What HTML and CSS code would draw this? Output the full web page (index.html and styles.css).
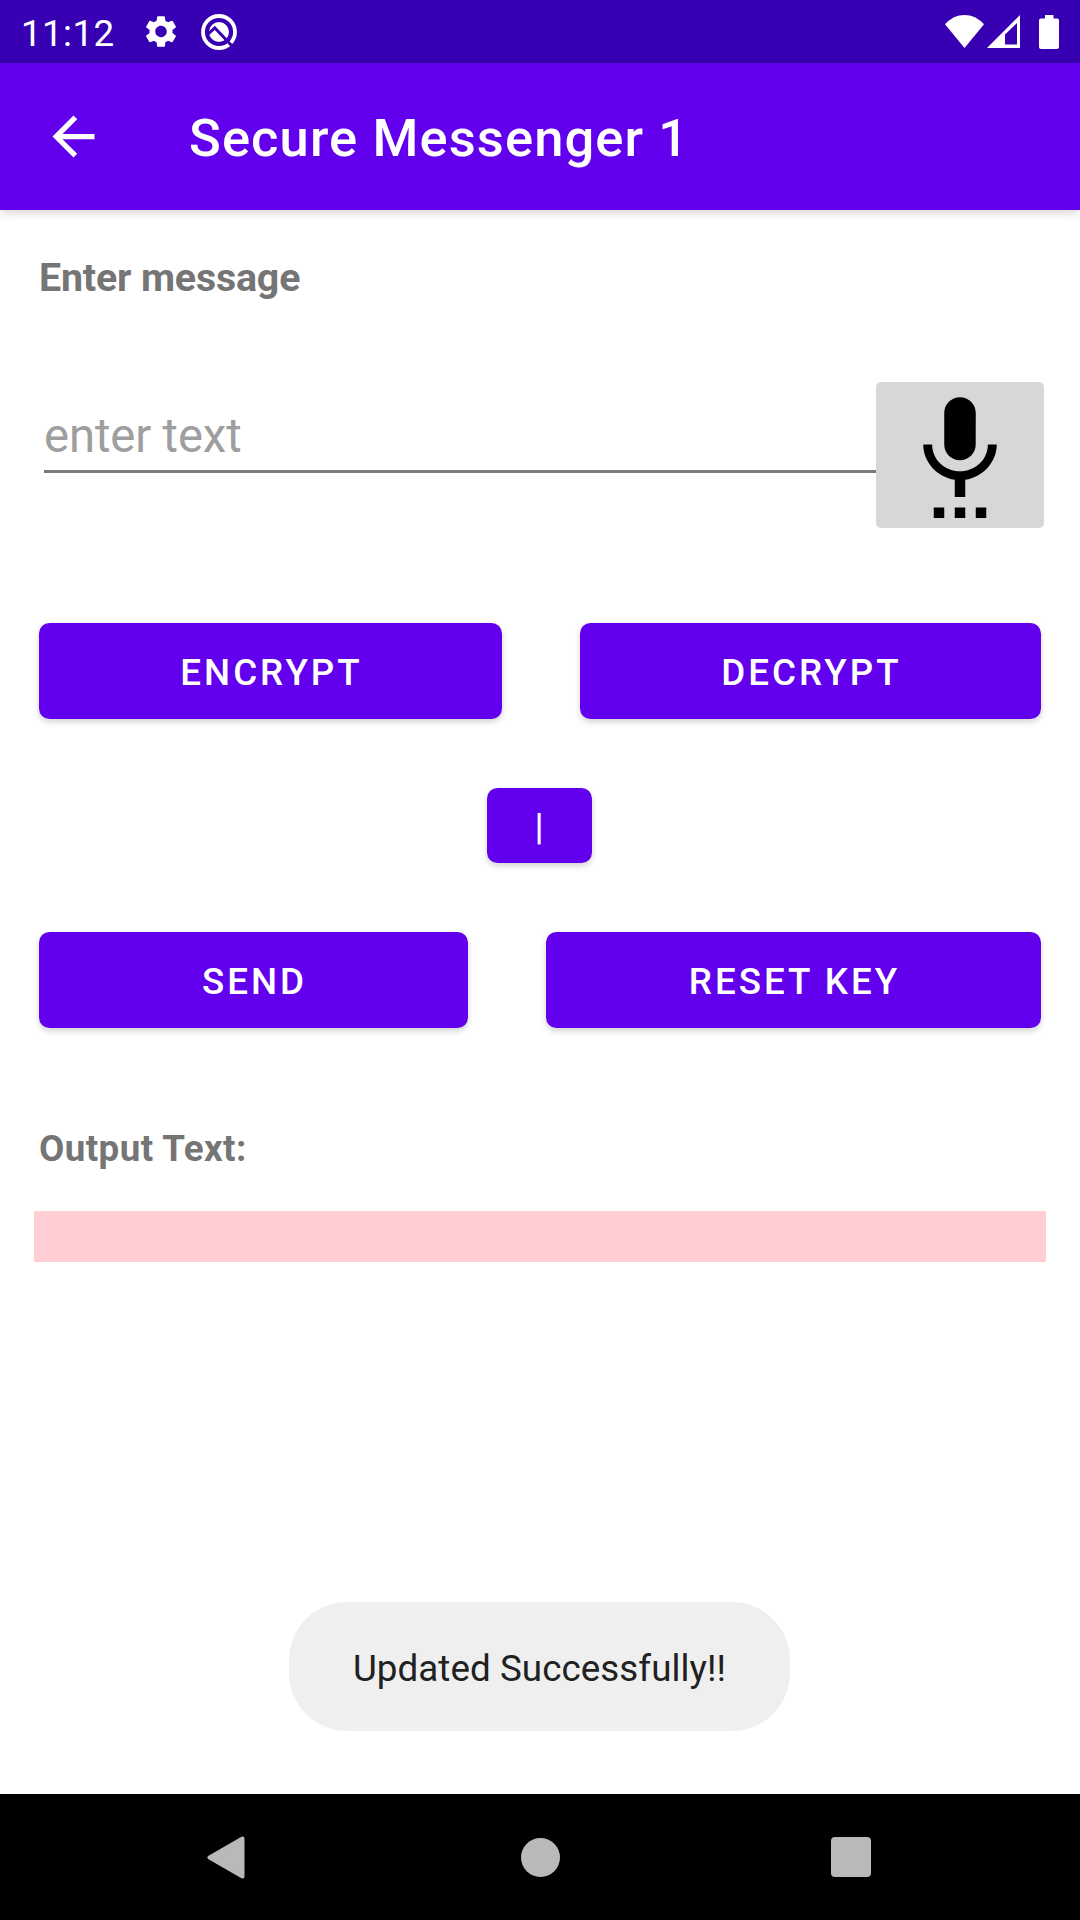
FILE: index.html
```html
<!DOCTYPE html>
<html lang="en">
<head>
<meta charset="utf-8">
<title>Secure Messenger 1</title>
<link rel="stylesheet" href="styles.css">
</head>
<body>
<div class="screen">
  <div class="status-bar">
    <span class="clock">11:12</span>
    <svg class="gear" viewBox="2 2 20 20"><path fill="#fff" d="M19.14 12.94c.04-.3.06-.61.06-.94 0-.32-.02-.64-.07-.94l2.03-1.58a.49.49 0 0 0 .12-.61l-1.92-3.32a.488.488 0 0 0-.59-.22l-2.39.96c-.5-.38-1.03-.7-1.62-.94l-.36-2.54a.484.484 0 0 0-.48-.41h-3.84c-.24 0-.43.17-.47.41l-.36 2.54c-.59.24-1.13.57-1.62.94l-2.39-.96c-.22-.08-.47 0-.59.22L2.74 8.87c-.12.21-.08.47.12.61l2.03 1.58c-.05.3-.09.63-.09.94s.02.64.07.94l-2.03 1.58a.49.49 0 0 0-.12.61l1.92 3.32c.12.22.37.29.59.22l2.39-.96c.5.38 1.03.7 1.62.94l.36 2.54c.05.24.24.41.48.41h3.84c.24 0 .44-.17.47-.41l.36-2.54c.59-.24 1.13-.56 1.62-.94l2.39.96c.22.08.47 0 .59-.22l1.92-3.32c.12-.22.07-.47-.12-.61l-2.01-1.58zM12 15.6A3.61 3.61 0 0 1 8.4 12c0-1.98 1.62-3.6 3.6-3.6s3.6 1.62 3.6 3.6-1.62 3.6-3.6 3.6z"/></svg>
    <svg class="debug" viewBox="0 0 36 36">
      <circle cx="18" cy="18" r="16" fill="none" stroke="#fff" stroke-width="3.800"/>
      <circle cx="18" cy="18" r="10" fill="#fff"/>
      <path fill="none" stroke="#3700b3" stroke-width="3" d="M6.500 20.500l7.300-6.700L31 32"/>
    </svg>
    <div class="signals">
      <svg class="wifi" viewBox="0 0 39 33"><path fill="#fff" d="M0 9.300C11-3.100 28-3.100 39 9.300L19.500 33z"/></svg>
      <svg class="cell" viewBox="0 0 33 33"><path fill="#fff" fill-rule="evenodd" d="M33 0v33H0zM30 8L18 19.500V29.500H30z"/></svg>
      <svg class="battery" viewBox="0 0 20 34"><path fill="#fff" d="M6 0h8.500v3.500H18q2 0 2 2V32q0 2-2 2H2q-2 0-2-2V5.500q0-2 2-2h4z"/></svg>
    </div>
  </div>
  <header class="app-bar">
    <svg class="back" viewBox="0 0 24 24"><path fill="#fff" d="M20 11H7.830l5.590-5.590L12 4l-8 8 8 8 1.410-1.410L7.830 13H20z"/></svg>
    <h1 class="title">Secure Messenger 1</h1>
  </header>
  <main class="content">
    <div class="label">Enter message</div>
    <div class="input-row">
      <div class="field">enter text</div>
      <div class="mic-button">
        <svg class="mic" viewBox="0 0 24 24"><path d="M7 24h2v-2H7zM12 13c1.660 0 2.990-1.340 2.990-3L15 4c0-1.660-1.340-3-3-3S9 2.340 9 4v6c0 1.660 1.340 3 3 3zM11 24h2v-2h-2zM15 24h2v-2h-2zM19 10h-1.700c0 3-2.540 5.100-5.300 5.100S6.700 13 6.700 10H5c0 3.410 2.720 6.230 6 6.720V20h2v-3.280c3.280-.49 6-3.310 6-6.720z"/></svg>
      </div>
    </div>
    <div class="button-row crypt-row">
      <div class="button">ENCRYPT</div>
      <div class="button">DECRYPT</div>
    </div>
    <div class="button small">|</div>
    <div class="button-row send-row">
      <div class="button">SEND</div>
      <div class="button">RESET KEY</div>
    </div>
    <div class="label output-label">Output Text:</div>
    <div class="output"></div>
    <div class="toast">Updated Successfully!!</div>
  </main>
  <nav class="nav-bar">
    <svg class="nav-back" viewBox="0 0 38 43"><path fill="#b9b9b9" stroke="#b9b9b9" stroke-width="4" stroke-linejoin="round" d="M35.500 2.500v38L2.500 21.500z"/></svg>
    <div class="nav-home"></div>
    <div class="nav-recent"></div>
  </nav>
</div>
</body>
</html>
```
FILE: styles.css
```css
* {
  box-sizing: border-box;
}

body {
  margin: 0;
  background: #fff;
  font-family: Roboto, "Liberation Sans", sans-serif;
}

.screen {
  width: 1080px;
  height: 1920px;
  display: flex;
  flex-direction: column;
}

svg {
  display: block;
  flex: none;
}

.status-bar {
  height: 63px;
  flex: none;
  display: flex;
  align-items: center;
  padding: 0 21px;
  background: #3700b3;
  color: #fff;
}

.clock {
  width: 124px;
  font-size: 36.75px;
  line-height: 43px;
  padding-top: 3px;
  letter-spacing: 0.4px;
}

.gear {
  width: 32px;
  height: 33px;
}

.debug {
  width: 36px;
  height: 36px;
  margin-left: 24px;
}

.signals {
  display: flex;
  align-items: center;
  margin-left: auto;
}

.wifi {
  width: 39px;
  height: 33px;
}

.cell {
  width: 33px;
  height: 33px;
  margin-left: 3px;
}

.battery {
  width: 20px;
  height: 34px;
  margin-left: 19px;
}

.app-bar {
  height: 147px;
  flex: none;
  display: flex;
  align-items: center;
  padding-left: 42px;
  background: #6200ee;
  color: #fff;
  box-shadow: 0 2px 10px rgba(0, 0, 0, 0.2);
}

.back {
  width: 63px;
  height: 63px;
}

.title {
  margin: 2px 0 0 84px;
  font-size: 52.5px;
  line-height: 62px;
  font-weight: 500;
  letter-spacing: 1.1px;
}

.content {
  flex: 1;
  display: flex;
  flex-direction: column;
  padding: 45px 34px 0;
}

.label {
  margin-left: 5px;
  font-size: 39.375px;
  line-height: 46px;
  font-weight: 700;
  letter-spacing: -0.18px;
  color: #757575;
}

.input-row {
  display: flex;
  margin: 81px 2px 0 10px;
}

.field {
  flex: 1;
  height: 91px;
  padding-top: 27px;
  border-bottom: 3px solid #7b7b7b;
  font-size: 47.25px;
  line-height: 55px;
  letter-spacing: -0.13px;
  color: #9e9e9e;
}

.mic-button {
  width: 168px;
  height: 146px;
  display: flex;
  justify-content: center;
  align-items: center;
  background: #d6d7d7;
  border-radius: 5px;
}

.mic {
  width: 126px;
  height: 126px;
}

.button-row {
  display: grid;
  margin: 0 5px;
  column-gap: 78px;
}

.crypt-row {
  grid-template-columns: 463px 461px;
  margin-top: 95px;
}

.send-row {
  grid-template-columns: 429px 495px;
  margin-top: 69px;
}

.button {
  height: 96px;
  display: flex;
  justify-content: center;
  align-items: center;
  padding: 2px 0 0 2px;
  background: #6200ee;
  border-radius: 10.5px;
  box-shadow: 0 3px 6px rgba(0, 0, 0, 0.18);
  color: #fff;
  font-size: 36.75px;
  font-weight: 500;
  letter-spacing: 3px;
}

.small {
  width: 105px;
  height: 75px;
  margin: 69px 0 0 453px;
}

.output-label {
  margin-top: 99px;
  font-size: 36.75px;
  line-height: 43px;
  letter-spacing: 0.42px;
}

.output {
  height: 51px;
  margin-top: 41px;
  background: #ffcdd2;
}

.toast {
  width: 501px;
  height: 129px;
  margin: 340px 0 0 255px;
  padding-top: 3px;
  display: flex;
  justify-content: center;
  align-items: center;
  background: #efefef;
  border-radius: 58px;
  font-size: 36.75px;
  letter-spacing: 0.06px;
  color: #212121;
}

.nav-bar {
  height: 126px;
  flex: none;
  display: grid;
  grid-template-columns: 38px 39px 40px;
  column-gap: 274px;
  align-items: center;
  padding-left: 207px;
  background: #000;
}

.nav-back {
  width: 38px;
  height: 43px;
}

.nav-home {
  width: 39px;
  height: 39px;
  margin-left: 1.5px;
  border-radius: 50%;
  background: #b9b9b9;
}

.nav-recent {
  width: 40px;
  height: 40px;
  margin-left: -1px;
  border-radius: 4px;
  background: #b9b9b9;
}
```
